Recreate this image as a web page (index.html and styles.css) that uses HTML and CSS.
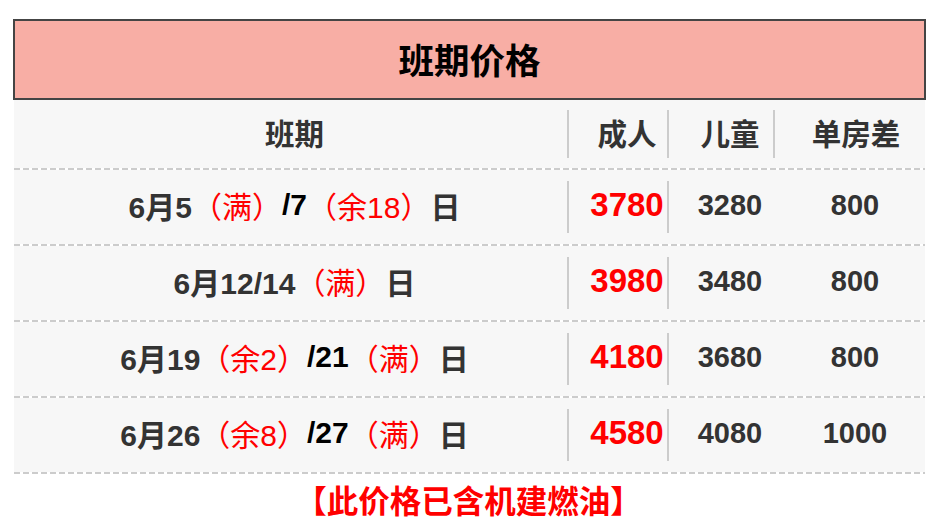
FILE: index.html
```html
<!DOCTYPE html>
<html lang="zh-CN">
<head>
<meta charset="utf-8">
<title>班期价格</title>
<link rel="stylesheet" href="styles.css">
</head>
<body>
<div class="wrap">
  <div class="title">班期价格</div>
  <div class="table">
    <div class="row head">
      <div class="cell c1"><div class="in">班期</div></div>
      <div class="cell sep c2"><div class="in">成人</div></div>
      <div class="cell sep c3"><div class="in">儿童</div></div>
      <div class="cell sep c4"><div class="in">单房差</div></div>
    </div>
    <div class="dash"></div>
    <div class="row">
      <div class="cell c1"><div class="in"><b>6月5</b><span class="r">（满）</span><b class="k">/7</b><span class="r">（余18）</span><b>日</b></div></div>
      <div class="cell sep c2"><div class="in price">3780</div></div>
      <div class="cell sep c3"><div class="in num">3280</div></div>
      <div class="cell c4"><div class="in num">800</div></div>
    </div>
    <div class="dash"></div>
    <div class="row">
      <div class="cell c1"><div class="in"><b>6月12/14</b><span class="r">（满）</span><b>日</b></div></div>
      <div class="cell sep c2"><div class="in price">3980</div></div>
      <div class="cell sep c3"><div class="in num">3480</div></div>
      <div class="cell c4"><div class="in num">800</div></div>
    </div>
    <div class="dash"></div>
    <div class="row">
      <div class="cell c1"><div class="in"><b>6月19</b><span class="r">（余2）</span><b class="k">/21</b><span class="r">（满）</span><b>日</b></div></div>
      <div class="cell sep c2"><div class="in price">4180</div></div>
      <div class="cell sep c3"><div class="in num">3680</div></div>
      <div class="cell c4"><div class="in num">800</div></div>
    </div>
    <div class="dash"></div>
    <div class="row">
      <div class="cell c1"><div class="in"><b>6月26</b><span class="r">（余8）</span><b class="k">/27</b><span class="r">（满）</span><b>日</b></div></div>
      <div class="cell sep c2"><div class="in price">4580</div></div>
      <div class="cell sep c3"><div class="in num">4080</div></div>
      <div class="cell c4"><div class="in num">1000</div></div>
    </div>
    <div class="dash"></div>
  </div>
  <div class="note">【此价格已含机建燃油】</div>
</div>
</body>
</html>
```
FILE: styles.css
```css
html, body {
  margin: 0;
  padding: 0;
  background: #ffffff;
}
body {
  font-family: "Liberation Sans", "Noto Sans CJK SC", sans-serif;
  color: #333333;
}
.wrap {
  width: 913px;
  margin: 19px 0 0 13px;
}
.title {
  height: 75px;
  border: 2px solid #444444;
  background: #f8aea5;
  display: flex;
  align-items: center;
  justify-content: center;
  font-family: "Noto Sans CJK SC", sans-serif;
  font-weight: 700;
  font-size: 35.5px;
  color: #000000;
  padding-bottom: 2px;
  box-sizing: content-box;
}
.table {
  margin: 0 1px;
  background: #f7f7f7;
}
.row {
  display: grid;
  grid-template-columns: 553px 100px 106px 152px;
  height: 74px;
}
.row.head {
  height: 68px;
}
.cell {
  display: flex;
  align-items: center;
}
.cell .in {
  flex: 1;
  height: 52px;
  display: flex;
  align-items: center;
  justify-content: center;
  white-space: nowrap;
  box-sizing: border-box;
  padding-bottom: 4px;
}
.head .cell .in {
  height: 48px;
  font-family: "Noto Sans CJK SC", sans-serif;
  font-weight: 700;
  font-size: 29.5px;
  color: #333333;
  padding-bottom: 5px;
}
.cell.sep .in {
  border-left: 2px solid #cccccc;
}
.c1 .in {
  padding-left: 8px;
  font-size: 30px;
}
.c2 .in {
  padding-left: 18px;
}
.c3 .in {
  padding-left: 18px;
}
.c4 .in {
  padding-left: 12px;
}
.c1 b {
  font-weight: 700;
  color: #333333;
}
.c1 b.k {
  color: #000000;
}
.c1 .r {
  color: #ff0000;
  font-weight: 400;
}
.price {
  color: #ff0000;
  font-weight: 700;
  font-size: 33px;
}
.num {
  color: #333333;
  font-weight: 700;
  font-size: 29px;
}
.dash {
  height: 2px;
  background: repeating-linear-gradient(to right, #cccccc 0 6px, transparent 6px 9px);
  background-color: #ffffff;
}
.note {
  text-align: center;
  font-family: "Noto Sans CJK SC", sans-serif;
  font-weight: 700;
  font-size: 31.5px;
  color: #ff0000;
  line-height: 50px;
  margin-top: 0;
  padding-right: 2px;
}
```
